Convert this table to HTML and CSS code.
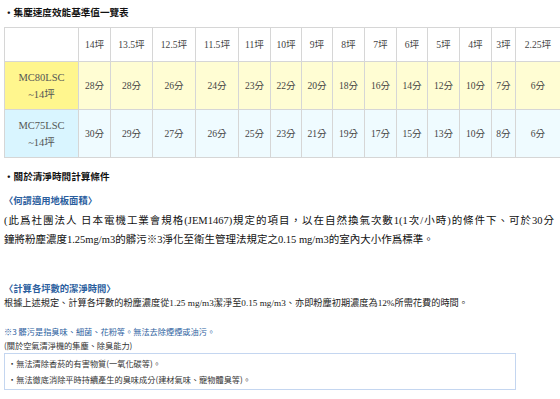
FILE: index.html
```html
<!DOCTYPE html>
<html lang="zh-Hant">
<head>
<meta charset="utf-8">
<title>集塵速度效能基準值一覽表</title>
<link rel="stylesheet" href="styles.css">
</head>
<body>
<div class="page">
  <h2 class="sec-title">•集塵速度效能基準值一覽表</h2>
  <table class="spec">
    <colgroup>
      <col class="c-name">
      <col style="width:32px"><col style="width:42px"><col style="width:43px"><col style="width:43px">
      <col style="width:32px"><col style="width:31px"><col style="width:31px"><col style="width:32px">
      <col style="width:32px"><col style="width:31px"><col style="width:32px"><col style="width:32px">
      <col style="width:24px"><col style="width:45px">
    </colgroup>
    <tr class="row-head">
      <td></td><td>14坪</td><td>13.5坪</td><td>12.5坪</td><td>11.5坪</td><td>11坪</td><td>10坪</td><td>9坪</td><td>8坪</td><td>7坪</td><td>6坪</td><td>5坪</td><td>4坪</td><td>3坪</td><td>2.25坪</td>
    </tr>
    <tr class="row-y">
      <td class="name">MC80LSC<br>~14坪</td><td>28分</td><td>28分</td><td>26分</td><td>24分</td><td>23分</td><td>22分</td><td>20分</td><td>18分</td><td>16分</td><td>14分</td><td>12分</td><td>10分</td><td>7分</td><td>6分</td>
    </tr>
    <tr class="row-b">
      <td class="name">MC75LSC<br>~14坪</td><td>30分</td><td>29分</td><td>27分</td><td>26分</td><td>25分</td><td>23分</td><td>21分</td><td>19分</td><td>17分</td><td>15分</td><td>13分</td><td>10分</td><td>8分</td><td>6分</td>
    </tr>
  </table>

  <h2 class="sec-title sec-2">•關於清淨時間計算條件</h2>
  <h3 class="sub-title">〈何謂適用地板面積〉</h3>
  <p class="para"><span class="para-l1">(此爲社團法人 日本電機工業會規格(JEM1467)規定的項目，以在自然換氣次數1(1次/小時)的條件下、可於30分</span>鐘將粉塵濃度1.25mg/m3的髒污※3淨化至衛生管理法規定之0.15 mg/m3的室內大小作爲標準。</p>

  <h3 class="sub-title sub-2">〈計算各坪數的潔淨時間〉</h3>
  <p class="small">根據上述規定、計算各坪數的粉塵濃度從1.25 mg/m3潔淨至0.15 mg/m3、亦即粉塵初期濃度為12%所需花費的時間。</p>

  <p class="note">※3 髒污是指臭味、細菌、花粉等。無法去除煙煙或油污。</p>
  <p class="note-sub">(關於空氣清淨機的集塵、除臭能力)</p>
  <div class="box">
    <p>・無法清除香菸的有害物質(一氧化碳等)。</p>
    <p>・無法徹底消除平時持續產生的臭味成分(建材氣味、寵物體臭等)。</p>
  </div>
</div>
</body>
</html>
```
FILE: styles.css
```css
html, body {
  margin: 0;
  padding: 0;
  background: #ffffff;
}
.page {
  padding: 5px 0 0 4px;
  font-family: "Liberation Serif", "Noto Sans CJK TC", serif;
  color: #222;
}
h2, h3, p { margin: 0; }

.sec-title {
  font-family: "Noto Sans CJK TC", sans-serif;
  font-size: 9.6px;
  line-height: 14px;
  font-weight: 700;
  color: #111;
  margin-bottom: 8px;
}
.sec-2 {
  margin-top: 11px;
  margin-bottom: 0;
}

.spec {
  border-collapse: collapse;
  table-layout: fixed;
  width: 556px;
  font-size: 9.6px;
  color: #444;
}
.spec td {
  border: 1px solid #d6d6d6;
  text-align: center;
  vertical-align: middle;
  padding: 0;
  white-space: nowrap;
  line-height: 15px;
}
.c-name { width: 74px; }
.row-head td { height: 33px; background: #fff; }
.row-y td { height: 47px; background: #fffdd3; }
.row-b td { height: 47px; background: #effbff; }
.row-y td.name { background: #fff68e; font-size: 10.5px; line-height: 17px; color: #555; }
.row-b td.name { background: #d9f5ff; font-size: 10.5px; line-height: 17px; color: #555; }

.sub-title {
  font-family: "Noto Sans CJK TC", sans-serif;
  font-size: 9.3px;
  line-height: 14px;
  font-weight: 700;
  color: #2b5e9e;
  margin-top: 10px;
}
.sub-2 { margin-top: 32px; }

.para {
  font-size: 10.5px;
  line-height: 19px;
  color: #111;
  margin-top: 4px;
  width: 550px;
}
.para-l1 {
  display: block;
  text-align: justify;
  text-align-last: justify;
}
.small {
  font-size: 9.2px;
  line-height: 14px;
  color: #222;
  margin-top: 1px;
}
.note {
  font-family: "Noto Sans CJK TC", sans-serif;
  font-size: 8.2px;
  line-height: 14px;
  color: #2b5e9e;
  margin-top: 14px;
}
.note-sub {
  font-family: "Noto Sans CJK TC", sans-serif;
  font-size: 8.2px;
  line-height: 14px;
  color: #333;
}
.box {
  margin-top: 1px;
  width: 507px;
  border: 1px solid #c4d6f0;
  padding: 1px 0 2px 3px;
  font-family: "Noto Sans CJK TC", sans-serif;
  font-size: 8.2px;
  line-height: 16px;
  color: #333;
}
```
